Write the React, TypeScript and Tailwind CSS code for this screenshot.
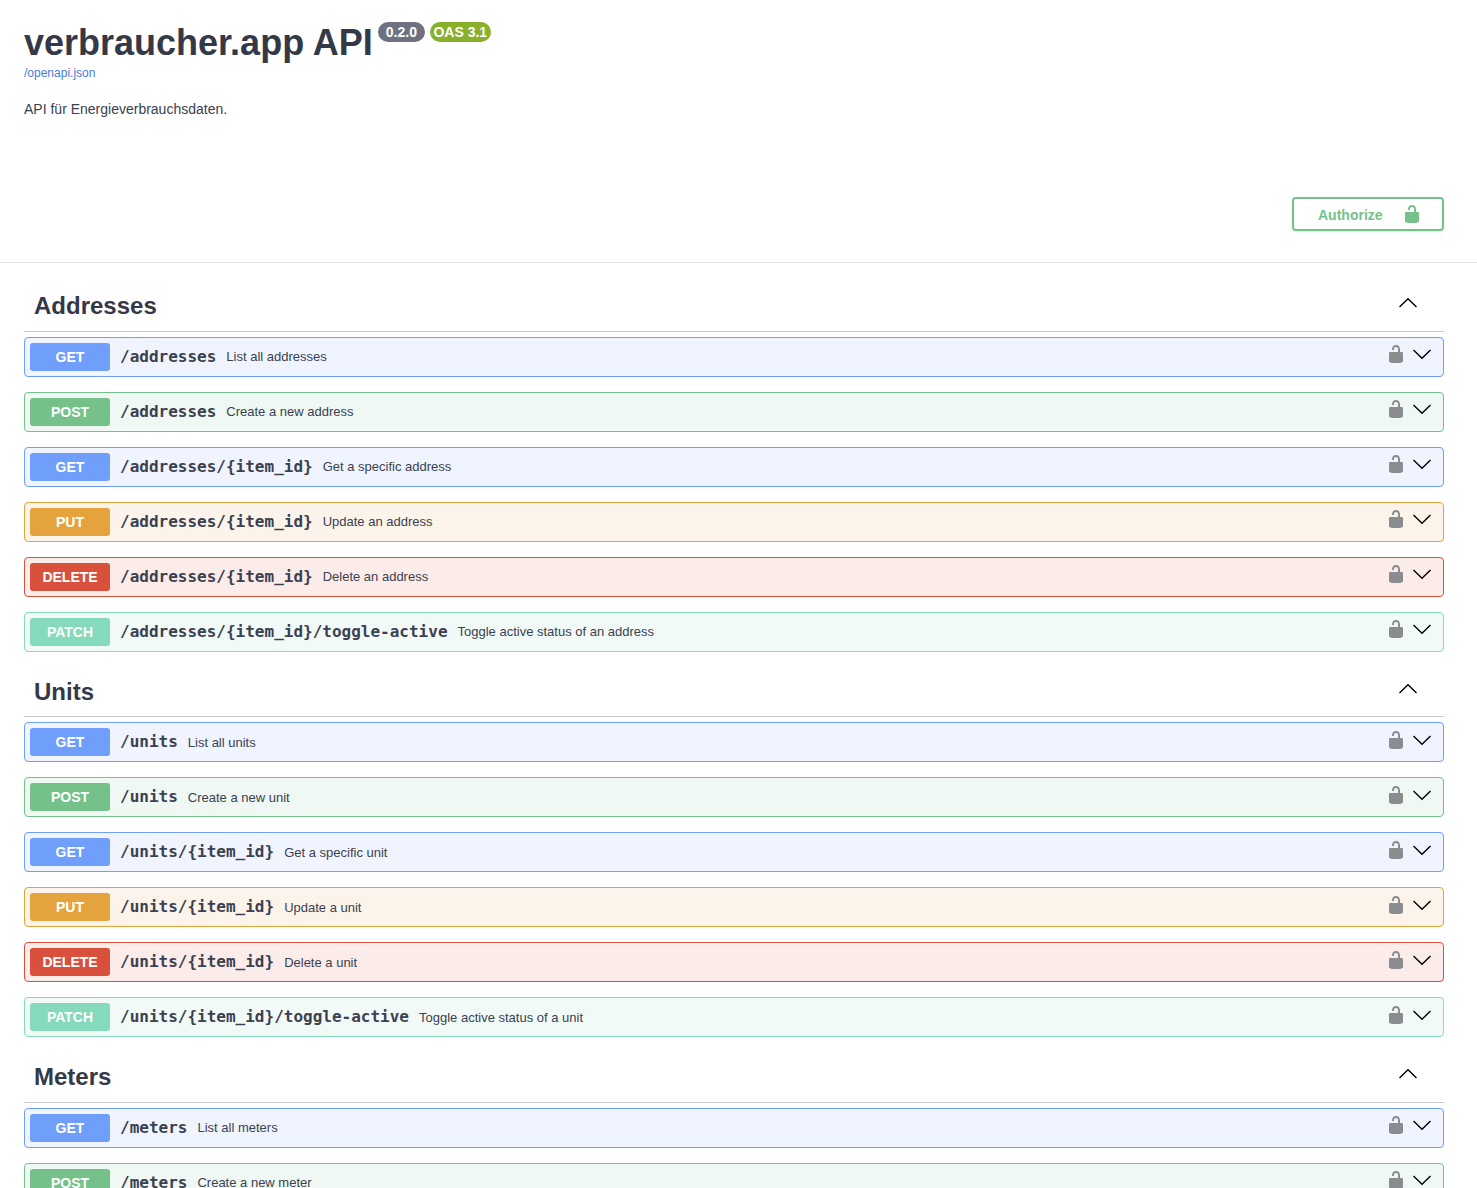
import type { ReactNode } from "react";

type Method = "GET" | "POST" | "PUT" | "DELETE" | "PATCH";

const METHOD: Record<Method, { row: string; badge: string }> = {
  GET: { row: "border-[#6f9ffb] bg-[#f0f4fe]", badge: "bg-[#6f9ffb]" },
  POST: { row: "border-[#74c28a] bg-[#eff8f2]", badge: "bg-[#74c28a]" },
  PUT: { row: "border-[#e5a33d] bg-[#fcf4ea]", badge: "bg-[#e5a33d]" },
  DELETE: { row: "border-[#d9503c] bg-[#fbecea]", badge: "bg-[#d9503c]" },
  PATCH: { row: "border-[#85dabb] bg-[#f2faf8]", badge: "bg-[#85dabb]" },
};

const SECTIONS: { title: string; ops: [Method, string, string][] }[] = [
  {
    title: "Addresses",
    ops: [
      ["GET", "/addresses", "List all addresses"],
      ["POST", "/addresses", "Create a new address"],
      ["GET", "/addresses/{item_id}", "Get a specific address"],
      ["PUT", "/addresses/{item_id}", "Update an address"],
      ["DELETE", "/addresses/{item_id}", "Delete an address"],
      ["PATCH", "/addresses/{item_id}/toggle-active", "Toggle active status of an address"],
    ],
  },
  {
    title: "Units",
    ops: [
      ["GET", "/units", "List all units"],
      ["POST", "/units", "Create a new unit"],
      ["GET", "/units/{item_id}", "Get a specific unit"],
      ["PUT", "/units/{item_id}", "Update a unit"],
      ["DELETE", "/units/{item_id}", "Delete a unit"],
      ["PATCH", "/units/{item_id}/toggle-active", "Toggle active status of a unit"],
    ],
  },
  {
    title: "Meters",
    ops: [
      ["GET", "/meters", "List all meters"],
      ["POST", "/meters", "Create a new meter"],
    ],
  },
];

function LockIcon({ className }: { className: string }) {
  return (
    <svg viewBox="0 0 20 20" className={className} fill="currentColor" aria-hidden>
      <path d="M15.8 8H14V5.6C14 2.703 12.665 1 10 1 7.334 1 6 2.703 6 5.6V6h2v-.801C8 3.754 8.797 3 10 3c1.203 0 2 .754 2 2.199V8H4c-.553 0-1 .646-1 1.199V17c0 .549.428 1.139.951 1.307l1.197.387C5.672 18.861 6.55 19 7.1 19h5.8c.549 0 1.428-.139 1.951-.307l1.196-.387c.524-.167.953-.757.953-1.306V9.199C17 8.646 16.352 8 15.8 8z" />
    </svg>
  );
}

function Chevron({ up }: { up?: boolean }) {
  return (
    <svg viewBox="0 0 20 20" className="h-5 w-5 text-black" fill="none" stroke="currentColor" strokeWidth="1.4" aria-hidden>
      <path d={up ? "M1.5 14 10 5.8 18.5 14" : "M1.5 6 10 14.2 18.5 6"} />
    </svg>
  );
}

function Badge({ className, children }: { className: string; children: ReactNode }) {
  return (
    <span className={`mt-px flex h-5 items-center rounded-full text-sm font-bold text-white ${className}`}>
      {children}
    </span>
  );
}

function Operation({ method, path, summary }: { method: Method; path: string; summary: string }) {
  const m = METHOD[method];
  return (
    <div className={`mb-[15px] flex h-10 items-center rounded border p-[5px] ${m.row}`}>
      <span className={`flex h-7 w-20 shrink-0 items-center justify-center rounded-[3px] text-sm font-bold text-white ${m.badge}`}>
        {method}
      </span>
      <span className="px-2.5 font-['DejaVu_Sans_Mono',monospace] text-base font-semibold text-[#3b4151]">{path}</span>
      <span className="text-[13px] text-[#3b4151]">{summary}</span>
      <div className="mb-[5px] ml-auto flex items-center gap-1.5 pr-1.5">
        <LockIcon className="h-5 w-5 text-[#8b8c90]" />
        <Chevron />
      </div>
    </div>
  );
}

export default function App() {
  return (
    <div className="h-screen overflow-hidden bg-white font-['Liberation_Sans',Arial,sans-serif] text-[#3b4151]">
      <header className="h-[263px] border-b border-[#e3e3e3] pt-[21px] pr-[33px] pl-6">
        <div className="flex items-start">
          <h1 className="text-4xl leading-[44px] font-bold text-[#343847]">verbraucher.app API</h1>
          <Badge className="ml-[5px] bg-[#6e7180] px-2">0.2.0</Badge>
          <Badge className="ml-[5px] bg-[#89b02b] px-[3.5px]">OAS 3.1</Badge>
        </div>
        <a className="block text-xs text-[#4a78e0]">/openapi.json</a>
        <p className="mt-[18px] text-sm">API für Energieverbrauchsdaten.</p>
        <div className="mt-[78px] flex justify-end">
          <button className="flex h-[34px] w-[152px] items-center rounded border-2 border-[#74c28a] pl-6 text-sm font-bold text-[#74c28a] shadow-sm">
            <span className="mt-0.5">Authorize</span>
            <LockIcon className="ml-[19px] h-5 w-5" />
          </button>
        </div>
      </header>
      <main className="pt-[18.52px] pr-[33px] pl-6">
        {SECTIONS.map((s) => (
          <section key={s.title}>
            <div className="mb-[5px] flex h-[50.48px] items-center border-b border-[#c9c9c9] pr-[26px] pl-2.5">
              <h2 className="text-2xl font-bold text-[#343847]">{s.title}</h2>
              <div className="mb-1.5 ml-auto">
                <Chevron up />
              </div>
            </div>
            {s.ops.map(([method, path, summary], i) => (
              <Operation key={i} method={method} path={path} summary={summary} />
            ))}
          </section>
        ))}
      </main>
    </div>
  );
}
